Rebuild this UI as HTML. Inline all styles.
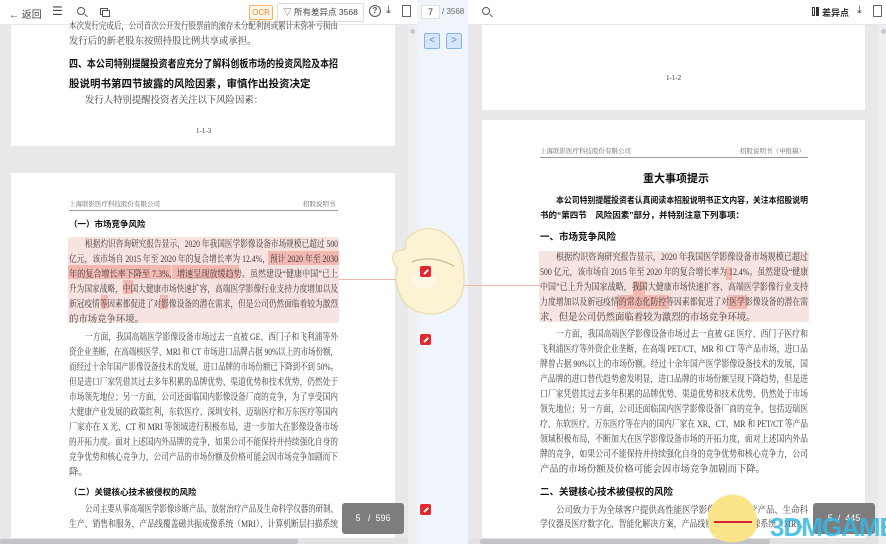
<!DOCTYPE html>
<html><head><meta charset="utf-8">
<style>
*{margin:0;padding:0;box-sizing:border-box}
body{width:886px;height:544px;overflow:hidden;background:#e8e8eb;font-family:"Liberation Serif","Noto Serif CJK SC",serif;color:#333;position:relative}
.abs{position:absolute}
.tb{top:0;height:25px;background:#fff;border-bottom:1px solid #e6e6e6}
.tt{font-family:"Liberation Sans","Noto Sans CJK SC",sans-serif;font-size:9px;color:#444}
.page{background:#fff;position:absolute}
.ln{position:absolute;font-size:9.4px;line-height:12px;white-space:nowrap;text-align:justify;text-align-last:justify;color:#3a3a3a;transform-origin:0 0}
.nl{text-align-last:left}
.h{font-family:"Liberation Sans","Noto Sans CJK SC",sans-serif;font-weight:bold;color:#111;white-space:nowrap;position:absolute;transform-origin:0 0}
.hl{position:absolute;background:#f7e4e0}
.hd{position:absolute;background:#f3b9b0}
.ed{position:absolute;width:11px;height:11px;background:#e0282e;border-radius:2px}
.ed:after{content:"";position:absolute;left:3px;top:5px;width:6px;height:1.5px;background:#fff;transform:rotate(-45deg)}
</style></head><body>
<div class="page" style="left:11px;top:25px;width:384px;height:121px"></div>
<div class="page" style="left:11px;top:173px;width:384px;height:371px"></div>
<div class="abs" style="left:408px;top:25px;width:9px;height:519px;background:#efeff2"></div>
<div class="abs" style="left:410px;top:29px;width:5px;height:5px;border-radius:50%;background:#c8c8cc"></div>
<div class="abs" style="left:417px;top:0;width:51px;height:544px;background:#f0f5fc"></div>
<div class="page" style="left:482px;top:25px;width:383px;height:85px"></div>
<div class="page" style="left:482px;top:120px;width:383px;height:424px"></div>
<div class="abs" style="left:878px;top:25px;width:8px;height:519px;background:#efeff2"></div>
<div class="abs" style="left:881px;top:29px;width:5px;height:5px;border-radius:50%;background:#c8c8cc"></div>
<div class="abs" style="left:0;top:538px;width:408px;height:6px;background:#e2e2e5"></div>
<div class="abs" style="left:0;top:539px;width:298px;height:5px;background:#c4c4c8;border-radius:2px"></div>
<div class="abs" style="left:468px;top:538px;width:410px;height:6px;background:#e2e2e5"></div>
<div class="abs" style="left:480px;top:539px;width:290px;height:5px;background:#c4c4c8;border-radius:2px"></div>

<div class="abs tb" style="left:0;width:417px"></div>
<div class="abs" style="left:417px;top:0;width:51px;height:25px;background:#f0f5fc"></div>
<div class="abs tb" style="left:468px;width:418px"></div>
<div class="abs tt" style="left:9px;top:6px;font-size:10px">←&nbsp;返回</div>
<div class="abs tt" style="left:52px;top:4px;font-size:12px">☰</div>
<div class="abs" style="left:77px;top:7px;width:8px;height:8px;border:1.3px solid #555;border-radius:50%"></div>
<div class="abs" style="left:84px;top:15px;width:4px;height:1.3px;background:#555;transform:rotate(45deg)"></div>
<div class="abs" style="left:100px;top:8px;width:8px;height:7px;border:1.3px solid #555"></div>
<div class="abs" style="left:102px;top:10px;width:8px;height:7px;border:1.3px solid #555;background:#fff"></div>
<div class="abs tt" style="left:249px;top:5px;width:24px;height:15px;border:1px solid #f2b26e;background:#fff6ec;color:#e98a2b;border-radius:2px;text-align:center;line-height:13px;font-size:8px">OCR</div>
<div class="abs tt" style="left:277px;top:3px;width:87px;height:19px;border:1px solid #ddd;border-radius:2px;line-height:17px;text-align:center;font-size:8.5px">▽ 所有差异点 3568</div>
<div class="abs" style="left:369px;top:5px;width:12px;height:12px;border:1.3px solid #555;border-radius:50%;font:bold 8px 'Liberation Sans';text-align:center;line-height:10px;color:#555">?</div>
<div class="abs tt" style="left:386px;top:4px;font-size:11px">⤓</div>
<div class="abs" style="left:402px;top:5px;width:9px;height:12px;border:1.2px solid #666"></div>
<div class="abs" style="left:421px;top:5px;width:19px;height:14px;background:#fff;border:1px solid #e0e0e0;font:9px 'Liberation Sans';text-align:center;line-height:12px">7</div>
<div class="abs tt" style="left:442px;top:7px;font-size:8px;color:#666">/ 3568</div>
<div class="abs" style="left:482px;top:7px;width:8px;height:8px;border:1.3px solid #555;border-radius:50%"></div>
<div class="abs" style="left:489px;top:15px;width:4px;height:1.3px;background:#555;transform:rotate(45deg)"></div>
<div class="abs" style="left:812px;top:7px;width:3px;height:9px;border:1px solid #333"></div>
<div class="abs" style="left:816px;top:7px;width:3px;height:9px;background:#333"></div>
<div class="abs tt" style="left:822px;top:6px;font-size:9px;font-weight:bold;color:#333">差异点</div>
<div class="abs tt" style="left:857px;top:4px;font-size:11px">⤓</div>
<div class="abs" style="left:873px;top:5px;width:9px;height:12px;border:1.2px solid #666"></div>
<div class="abs" style="left:424px;top:33px;width:16px;height:16px;border:1px solid #86b4ea;background:#d6e7fb;border-radius:2px;color:#4a8ee0;font:10px 'Liberation Sans';text-align:center;line-height:14px">&lt;</div>
<div class="abs" style="left:446px;top:33px;width:16px;height:16px;border:1px solid #86b4ea;background:#d6e7fb;border-radius:2px;color:#4a8ee0;font:10px 'Liberation Sans';text-align:center;line-height:14px">&gt;</div>

<div class="ln" style="left:69px;top:21px;width:269px">本次发行完成后，公司首次公开发行股票前的滚存未分配利润或累计未弥补亏损由</div>
<div class="ln nl" style="left:69px;top:36px">发行后的新老股东按照持股比例共享或承担。</div>
<div class="h" data-w="269" style="left:69px;top:56px;font-size:10.5px">四、本公司特别提醒投资者应充分了解科创板市场的投资风险及本招</div>
<div class="h" style="left:69px;top:76px;font-size:10.5px">股说明书第四节披露的风险因素，审慎作出投资决定</div>
<div class="ln nl" style="left:85px;top:95px">发行人特别提醒投资者关注以下风险因素：</div>
<div class="ln nl" style="left:196px;top:125px;font-size:7px">1-1-3</div>

<div class="ln nl" style="left:69px;top:199px;font-size:6.5px;color:#666">上海联影医疗科技股份有限公司</div>
<div class="ln nl" style="left:303px;top:199px;font-size:6.5px;color:#666">招股说明书</div>
<div class="abs" style="left:69px;top:210px;width:269px;height:1px;background:#999"></div>
<div class="h" style="left:69px;top:218px;font-size:8.5px">（一）市场竞争风险</div>
<div class="hl" style="left:68px;top:237px;width:271px;height:86px"></div>
<div class="hd" style="left:268px;top:251px;width:71px;height:14px"></div>
<div class="hd" style="left:68px;top:265px;width:103px;height:14px"></div>
<div class="hd" style="left:172px;top:265px;width:67px;height:14px"></div>
<div class="hd" style="left:123px;top:280px;width:10px;height:14px"></div>
<div class="hd" style="left:101px;top:295px;width:7px;height:14px"></div>
<div class="hd" style="left:160px;top:295px;width:8px;height:14px"></div>
<div class="ln" style="left:85px;top:239px;width:253px">根据灼识咨询研究报告显示，2020 年我国医学影像设备市场规模已超过 500</div>
<div class="ln" style="left:69px;top:254px;width:269px">亿元，该市场自 2015 年至 2020 年的复合增长率为 12.4%，预计 2020 年至 2030</div>
<div class="ln" style="left:69px;top:269px;width:269px">年的复合增长率下降至 7.3%，增速呈现放缓趋势。虽然建设“健康中国”已上</div>
<div class="ln" style="left:69px;top:284px;width:269px">升为国家战略，中国大健康市场快速扩容，高端医学影像行业支持力度增加以及</div>
<div class="ln" style="left:69px;top:299px;width:269px">新冠疫情等因素都促进了对影像设备的潜在需求，但是公司仍然面临着较为激烈</div>
<div class="ln nl" style="left:69px;top:314px">的市场竞争环境。</div>
<div class="ln" style="left:85px;top:332px;width:253px">一方面，我国高端医学影像设备市场过去一直被 GE、西门子和飞利浦等外</div>
<div class="ln" style="left:69px;top:347px;width:269px">资企业垄断，在高端核医学、MRI 和 CT 市场进口品牌占据 90%以上的市场份额，</div>
<div class="ln" style="left:69px;top:362px;width:269px">而经过十余年国产影像设备技术的发展，进口品牌的市场份额已下降到不到 50%。</div>
<div class="ln" style="left:69px;top:377px;width:269px">但是进口厂家凭借其过去多年积累的品牌优势、渠道优势和技术优势，仍然处于</div>
<div class="ln" style="left:69px;top:392px;width:269px">市场领先地位；另一方面，公司还面临国内影像设备厂商的竞争，为了享受国内</div>
<div class="ln" style="left:69px;top:407px;width:269px">大健康产业发展的政策红利，东软医疗、深圳安科、迈瑞医疗和万东医疗等国内</div>
<div class="ln" style="left:69px;top:422px;width:269px">厂家亦在 X 光、CT 和 MRI 等领域进行积极布局，进一步加大在影像设备市场</div>
<div class="ln" style="left:69px;top:437px;width:269px">的开拓力度。面对上述国内外品牌的竞争，如果公司不能保持并持续强化自身的</div>
<div class="ln" style="left:69px;top:452px;width:269px">竞争优势和核心竞争力，公司产品的市场份额及价格可能会因市场竞争加剧而下</div>
<div class="ln nl" style="left:69px;top:467px">降。</div>
<div class="h" style="left:69px;top:486px;font-size:8.5px">（二）关键核心技术被侵权的风险</div>
<div class="ln" style="left:85px;top:504px;width:253px">公司主要从事高端医学影像诊断产品、放射治疗产品及生命科学仪器的研制、</div>
<div class="ln" style="left:69px;top:519px;width:269px">生产、销售和服务，产品线覆盖磁共振成像系统（MRI）、计算机断层扫描系统</div>
<div class="abs" style="left:342px;top:503px;width:62px;height:31px;background:#7d7d7d;border-radius:3px;color:#fff;font:9px 'Liberation Sans';line-height:31px;text-align:center">5&nbsp;&nbsp;&nbsp;/&nbsp;&nbsp;596</div>

<div class="ln nl" style="left:666px;top:72px;font-size:7px">1-1-2</div>
<div class="ln nl" style="left:540px;top:146px;font-size:6.5px;color:#666">上海联影医疗科技股份有限公司</div>
<div class="ln nl" style="left:740px;top:146px;font-size:6.5px;color:#666">招股说明书（申报稿）</div>
<div class="abs" style="left:540px;top:157px;width:268px;height:1px;background:#999"></div>
<div class="h" style="left:643px;top:170px;font-size:11px">重大事项提示</div>
<div class="h" data-w="252" style="left:556px;top:194px;font-size:8.5px">本公司特别提醒投资者认真阅读本招股说明书正文内容，关注本招股说明</div>
<div class="h" style="left:540px;top:209px;font-size:8.5px">书的“第四节　风险因素”部分，并特别注意下列事项：</div>
<div class="h" style="left:540px;top:229px;font-size:9.5px">一、市场竞争风险</div>
<div class="hl" style="left:539px;top:251px;width:270px;height:71px"></div>
<div class="hd" style="left:726px;top:267px;width:6px;height:13px"></div>
<div class="hd" style="left:633px;top:281px;width:12px;height:14px"></div>
<div class="hd" style="left:617px;top:295px;width:52px;height:14px"></div>
<div class="hd" style="left:728px;top:295px;width:19px;height:14px"></div>
<div class="ln" style="left:556px;top:252px;width:252px">根据灼识咨询研究报告显示，2020 年我国医学影像设备市场规模已超过</div>
<div class="ln" style="left:540px;top:267px;width:268px">500 亿元，该市场自 2015 年至 2020 年的复合增长率为 12.4%。虽然建设“健康</div>
<div class="ln" style="left:540px;top:282px;width:268px">中国”已上升为国家战略，我国大健康市场快速扩容、高端医学影像行业支持</div>
<div class="ln" style="left:540px;top:297px;width:268px">力度增加以及新冠疫情的常态化防控等因素都促进了对医学影像设备的潜在需</div>
<div class="ln nl" style="left:540px;top:312px">求，但是公司仍然面临着较为激烈的市场竞争环境。</div>
<div class="ln" style="left:556px;top:329px;width:252px">一方面，我国高端医学影像设备市场过去一直被 GE 医疗、西门子医疗和</div>
<div class="ln" style="left:540px;top:344px;width:268px">飞利浦医疗等外资企业垄断，在高端 PET/CT、MR 和 CT 等产品市场，进口品</div>
<div class="ln" style="left:540px;top:359px;width:268px">牌曾占据 90%以上的市场份额。经过十余年国产医学影像设备技术的发展，国</div>
<div class="ln" style="left:540px;top:374px;width:268px">产品牌的进口替代趋势愈发明显，进口品牌的市场份额呈现下降趋势，但是进</div>
<div class="ln" style="left:540px;top:389px;width:268px">口厂家凭借其过去多年积累的品牌优势、渠道优势和技术优势，仍然处于市场</div>
<div class="ln" style="left:540px;top:404px;width:268px">领先地位；另一方面，公司还面临国内医学影像设备厂商的竞争，包括迈瑞医</div>
<div class="ln" style="left:540px;top:419px;width:268px">疗、东软医疗、万东医疗等在内的国内厂家在 XR、CT、MR 和 PET/CT 等产品</div>
<div class="ln" style="left:540px;top:434px;width:268px">领域积极布局，不断加大在医学影像设备市场的开拓力度，面对上述国内外品</div>
<div class="ln" style="left:540px;top:449px;width:268px">牌的竞争，如果公司不能保持并持续强化自身的竞争优势和核心竞争力，公司</div>
<div class="ln nl" style="left:540px;top:464px">产品的市场份额及价格可能会因市场竞争加剧而下降。</div>
<div class="h" style="left:540px;top:484px;font-size:9.5px">二、关键核心技术被侵权的风险</div>
<div class="ln" style="left:556px;top:505px;width:252px">公司致力于为全球客户提供高性能医学影像、放射治疗产品、生命科</div>
<div class="ln" style="left:540px;top:519px;width:268px">学仪器及医疗数字化、智能化解决方案，产品线覆盖磁共振成像系统（MR）、</div>
<div class="abs" style="left:813px;top:503px;width:62px;height:31px;background:#7d7d7d;border-radius:3px;color:#fff;font:9px 'Liberation Sans';line-height:31px;text-align:center">5&nbsp;&nbsp;/&nbsp;&nbsp;445</div>

<div class="abs" style="left:339px;top:279px;width:60px;height:1px;background:#f0b8ae"></div>
<div class="abs" style="left:455px;top:285px;width:85px;height:1px;background:#f0b8ae"></div>
<svg class="abs" style="left:390px;top:222px" width="80" height="95" viewBox="0 0 80 95">
<path d="M22 12 Q40 0 58 14 Q75 30 74 60 Q72 88 44 92 Q14 92 8 66 Q4 56 8 46 Q0 40 4 30 Q14 28 16 26 Q14 18 22 12Z" fill="#fbf3d4" stroke="#e8d9a0" stroke-width="1"/>
<path d="M22 40 Q42 32 64 44" stroke="#c8b68a" fill="none" stroke-width="1.2"/>
<ellipse cx="34" cy="58" rx="12" ry="9" fill="#fff8e6"/>
</svg>
<div class="ed" style="left:420px;top:266px"></div>
<div class="ed" style="left:420px;top:334px"></div>
<div class="ed" style="left:420px;top:504px"></div>
<svg class="abs" style="left:700px;top:490px" width="70" height="54" viewBox="0 0 70 54"><path d="M20 8 Q35 0 48 10 Q60 22 56 40 Q48 54 28 52 Q10 50 8 34 Q6 16 20 8Z" fill="#f9e48a"/><path d="M14 32 L52 32" stroke="#d23" stroke-width="2"/></svg>
<div class="abs" style="left:770px;top:512px;font:bold 26px 'Liberation Sans';color:#34b9e6;opacity:.85;letter-spacing:-1px">3DMGAME</div>
<script>
document.querySelectorAll('.ln,.h').forEach(function(e){
  var w=e.style.width?parseFloat(e.style.width):(e.dataset.w?parseFloat(e.dataset.w):0);
  var s=document.createElement('span');s.style.whiteSpace='nowrap';s.textContent=e.textContent;
  s.style.font=getComputedStyle(e).font;s.style.position='absolute';s.style.visibility='hidden';
  document.body.appendChild(s);var nw=s.getBoundingClientRect().width;s.remove();
  if(w&&nw>w){e.style.width=nw+'px';e.style.transform='scaleX('+(w/nw)+')';}
});
</script>
</body></html>
